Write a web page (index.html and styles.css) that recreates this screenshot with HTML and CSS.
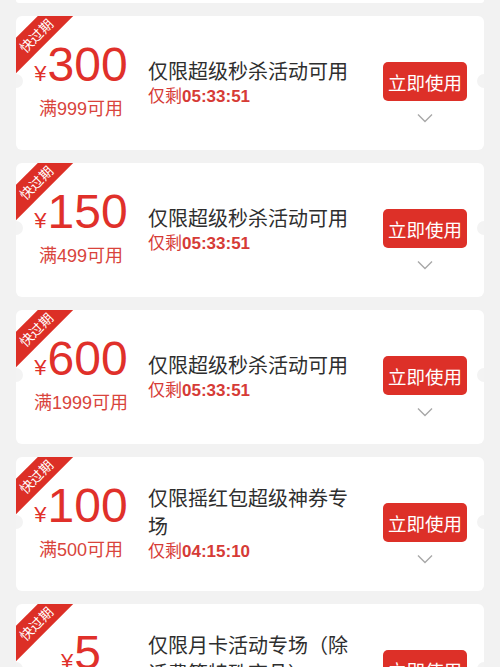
FILE: index.html
```html
<!DOCTYPE html>
<html lang="zh-CN">
<head>
<meta charset="utf-8">
<title>优惠券</title>
<link rel="stylesheet" href="styles.css">
</head>
<body>
<div class="list">
  <div class="stub"></div>

  <div class="card">
    <div class="ribbon">快过期</div>
    <div class="amount-col">
      <div class="amount"><span class="yen">¥</span>300</div>
      <div class="cond">满999可用</div>
    </div>
    <div class="info">
      <div class="title">仅限超级秒杀活动可用</div>
      <div class="timer">仅剩<b>05:33:51</b></div>
    </div>
    <div class="action">
      <button class="use">立即使用</button>
      <svg class="chev" width="16" height="10" viewBox="0 0 16 10"><polyline points="1,1.5 8,8.5 15,1.5" fill="none" stroke="#a8a8a8" stroke-width="1.4"/></svg>
    </div>
  </div>

  <div class="card">
    <div class="ribbon">快过期</div>
    <div class="amount-col">
      <div class="amount"><span class="yen">¥</span>150</div>
      <div class="cond">满499可用</div>
    </div>
    <div class="info">
      <div class="title">仅限超级秒杀活动可用</div>
      <div class="timer">仅剩<b>05:33:51</b></div>
    </div>
    <div class="action">
      <button class="use">立即使用</button>
      <svg class="chev" width="16" height="10" viewBox="0 0 16 10"><polyline points="1,1.5 8,8.5 15,1.5" fill="none" stroke="#a8a8a8" stroke-width="1.4"/></svg>
    </div>
  </div>

  <div class="card">
    <div class="ribbon">快过期</div>
    <div class="amount-col">
      <div class="amount"><span class="yen">¥</span>600</div>
      <div class="cond">满1999可用</div>
    </div>
    <div class="info">
      <div class="title">仅限超级秒杀活动可用</div>
      <div class="timer">仅剩<b>05:33:51</b></div>
    </div>
    <div class="action">
      <button class="use">立即使用</button>
      <svg class="chev" width="16" height="10" viewBox="0 0 16 10"><polyline points="1,1.5 8,8.5 15,1.5" fill="none" stroke="#a8a8a8" stroke-width="1.4"/></svg>
    </div>
  </div>

  <div class="card">
    <div class="ribbon">快过期</div>
    <div class="amount-col">
      <div class="amount"><span class="yen">¥</span>100</div>
      <div class="cond">满500可用</div>
    </div>
    <div class="info">
      <div class="title">仅限摇红包超级神券专场</div>
      <div class="timer">仅剩<b>04:15:10</b></div>
    </div>
    <div class="action">
      <button class="use">立即使用</button>
      <svg class="chev" width="16" height="10" viewBox="0 0 16 10"><polyline points="1,1.5 8,8.5 15,1.5" fill="none" stroke="#a8a8a8" stroke-width="1.4"/></svg>
    </div>
  </div>

  <div class="card">
    <div class="ribbon">快过期</div>
    <div class="amount-col">
      <div class="amount"><span class="yen">¥</span>5</div>
      <div class="cond">满50可用</div>
    </div>
    <div class="info">
      <div class="title">仅限月卡活动专场（除话费等特殊商品）</div>
      <div class="timer">仅剩<b>04:15:10</b></div>
    </div>
    <div class="action">
      <button class="use">立即使用</button>
      <svg class="chev" width="16" height="10" viewBox="0 0 16 10"><polyline points="1,1.5 8,8.5 15,1.5" fill="none" stroke="#a8a8a8" stroke-width="1.4"/></svg>
    </div>
  </div>
</div>
</body>
</html>
```
FILE: styles.css
```css
html, body {
  margin: 0;
  padding: 0;
  overflow: hidden;
  background: #f2f2f2;
}
body {
  font-family: "Liberation Sans", "Noto Sans CJK SC", sans-serif;
  color: #333;
}
.list {
  display: flex;
  flex-direction: column;
  gap: 13px;
  padding: 0 16px;
}
.stub {
  height: 3px;
  background: #fff;
  border-radius: 0 0 4px 4px;
}
.card {
  position: relative;
  overflow: hidden;
  display: flex;
  height: 134px;
  background: #fff;
  border-radius: 6px;
  flex-shrink: 0;
}
.card::before,
.card::after {
  content: "";
  position: absolute;
  top: 58px;
  width: 14px;
  height: 14px;
  border-radius: 50%;
  background: #f3f3f3;
}
.card::before { left: -7px; }
.card::after { right: -7px; }
.ribbon {
  position: absolute;
  left: -25px;
  top: 7px;
  width: 90px;
  height: 25px;
  line-height: 25px;
  background: #dc2f26;
  color: #fff;
  font-size: 13.5px;
  text-align: center;
  transform: rotate(-45deg);
  font-family: "Noto Sans CJK SC", sans-serif;
}
.amount-col {
  width: 130px;
  display: flex;
  flex-direction: column;
  justify-content: center;
  align-items: center;
  padding-bottom: 4px;
  box-sizing: border-box;
}
.amount {
  font-size: 48px;
  line-height: 45px;
  color: #e0302a;
  white-space: nowrap;
}
.yen {
  font-size: 22px;
  margin-right: 1px;
}
.cond {
  margin-top: 2px;
  font-size: 18px;
  line-height: 22px;
  color: #d9443c;
}
.info {
  flex: 0 0 210px;
  margin-left: 2px;
  display: flex;
  flex-direction: column;
  justify-content: center;
}
.title {
  font-size: 20px;
  line-height: 28px;
  color: #2e2e2e;
}
.timer {
  font-size: 17px;
  line-height: 22px;
  color: #d63b36;
}
.timer b {
  font-weight: bold;
}
.action {
  margin-left: auto;
  margin-right: 17px;
  padding-top: 46px;
  display: flex;
  flex-direction: column;
  align-items: center;
  gap: 12px;
}
.use {
  width: 84px;
  height: 39px;
  padding: 0;
  border: none;
  border-radius: 5px;
  background: #dd3028;
  color: #fff;
  font-family: "Noto Sans CJK SC", sans-serif;
  font-size: 18.5px;
}
.chev {
  display: block;
}
```
